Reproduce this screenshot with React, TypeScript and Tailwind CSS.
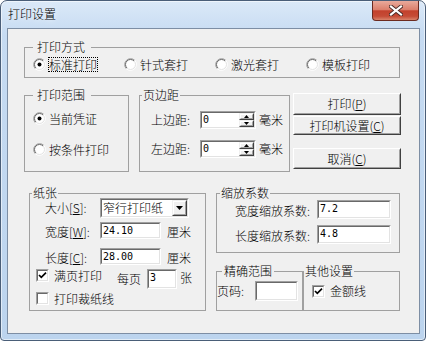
import React from "react";

const cjk = "font-['Noto_Sans_CJK_SC','Noto_Sans',sans-serif] font-light";
const mono = "font-['DejaVu_Sans_Mono',monospace] font-normal text-[10px] leading-[13px]";

function Sunken({ className = "", innerClassName = "", children }: { className?: string; innerClassName?: string; children?: React.ReactNode }) {
  return (
    <div className={"border border-t-[#a0a0a0] border-l-[#a0a0a0] border-b-white border-r-white " + className}>
      <div className={"h-full w-full border border-t-[#696969] border-l-[#696969] border-b-[#e3e3e3] border-r-[#e3e3e3] bg-white " + innerClassName}>
        {children}
      </div>
    </div>
  );
}

function Btn({ className = "", children }: { className?: string; children?: React.ReactNode }) {
  return (
    <div className={"border border-t-white border-l-white border-b-[#404040] border-r-[#404040] bg-[#f0f0f0] " + className}>
      <div className="h-full w-full border border-t-[#f0f0f0] border-l-[#f0f0f0] border-b-[#a0a0a0] border-r-[#a0a0a0] flex items-center justify-center leading-[14px]">
        {children}
      </div>
    </div>
  );
}

function SmallBtn({ className = "", children }: { className?: string; children?: React.ReactNode }) {
  return (
    <div className={"border border-t-[#f0f0f0] border-l-[#f0f0f0] border-b-[#404040] border-r-[#404040] bg-[#f0f0f0] " + className}>
      <div className="h-full w-full border border-t-white border-l-white border-b-[#a0a0a0] border-r-[#a0a0a0] flex items-center justify-center">
        {children}
      </div>
    </div>
  );
}

function RadioIcon({ checked }: { checked?: boolean }) {
  return (
    <svg width="13" height="13" viewBox="0 0 13 13" className="shrink-0">
      <circle cx="6.5" cy="6.5" r="5.5" fill="#fff" />
      <path d="M2.26 10.74 A6 6 0 0 1 10.74 2.26" stroke="#a0a0a0" strokeWidth="1" fill="none" />
      <path d="M10.74 2.26 A6 6 0 0 1 2.26 10.74" stroke="#ffffff" strokeWidth="1" fill="none" />
      <path d="M2.96 10.04 A5 5 0 0 1 10.04 2.96" stroke="#696969" strokeWidth="1" fill="none" />
      <path d="M10.04 2.96 A5 5 0 0 1 2.96 10.04" stroke="#e3e3e3" strokeWidth="1" fill="none" />
      {checked && <circle cx="6.5" cy="6.5" r="2" fill="#000" />}
    </svg>
  );
}

function Check({ checked }: { checked?: boolean }) {
  return (
    <div className="w-[13px] h-[13px] shrink-0 border border-t-[#a0a0a0] border-l-[#a0a0a0] border-b-white border-r-white">
      <div className="w-full h-full border border-t-[#696969] border-l-[#696969] border-b-[#e3e3e3] border-r-[#e3e3e3] bg-white flex items-center justify-center">
        {checked && (
          <svg width="9" height="9" viewBox="0 0 9 9">
            <polyline points="1,4 3.3,6.3 8,1.6" stroke="#000" strokeWidth="1.7" fill="none" />
          </svg>
        )}
      </div>
    </div>
  );
}

function Group({ className = "", label, labelClass = "", children }: { className?: string; label: string; labelClass?: string; children?: React.ReactNode }) {
  return (
    <div className={"relative border border-[#a0a0a0] " + className}>
      <span className={"absolute -top-[8px] bg-[#f0f0f0] leading-[14px] whitespace-nowrap " + labelClass}>{label}</span>
      {children}
    </div>
  );
}

function Radio({ checked, label, focus, className = "" }: { checked?: boolean; label: string; focus?: boolean; className?: string }) {
  return (
    <div className={"flex items-center h-[15px] " + className}>
      <RadioIcon checked={checked} />
      <span className={"ml-[2px] border leading-[13px] whitespace-nowrap " + (focus ? "border-dotted border-black" : "border-transparent")}>{label}</span>
    </div>
  );
}

function TriUp() {
  return (
    <svg width="5" height="3" viewBox="0 0 5 3"><polygon points="0,3 5,3 2.5,0" fill="#000" /></svg>
  );
}
function TriDown({ w = 5, h = 3 }: { w?: number; h?: number }) {
  return (
    <svg width={w} height={h} viewBox={`0 0 ${w} ${h}`}><polygon points={`0,0 ${w},0 ${w / 2},${h}`} fill="#000" /></svg>
  );
}

function SpinBox({ value }: { value: string }) {
  return (
    <Sunken className="w-[56px] h-[18px]" innerClassName="flex">
      <span className={"flex-1 pl-[1px] " + mono}>{value}</span>
      <div className="w-[15px] h-full flex flex-col">
        <SmallBtn className="flex-1"><TriUp /></SmallBtn>
        <SmallBtn className="flex-1"><TriDown /></SmallBtn>
      </div>
    </Sunken>
  );
}

export default function App() {
  return (
    <div className={"w-[426px] h-[341px] bg-white text-[12px] text-black " + cjk}>
      <div className="w-[426px] h-[341px] rounded-t-[7px] rounded-b-[4px] border border-[#4a5e78] bg-[linear-gradient(180deg,#dbe9f8_0%,#c6dbf2_10%,#bcd4ee_100%)] shadow-[inset_0_0_0_1px_rgba(255,255,255,0.55)] flex flex-col">
        {/* Title bar */}
        <div className="h-[27px] flex justify-between items-start">
          <span className="pl-[7px] pt-[6px] leading-[14px] [text-shadow:0_0_6px_#ffffff]">打印设置</span>
          <div className="mr-[6px] w-[47px] h-[20px] rounded-b-[4px] border border-t-0 border-[#6b2a20] bg-[linear-gradient(180deg,#e9aa9c_0%,#dc806d_45%,#c3412d_52%,#c54b36_80%,#d9836b_100%)] flex items-center justify-center">
            <svg width="14" height="11" viewBox="0 0 14 11">
              <path d="M2 1.5 L12 9.5 M12 1.5 L2 9.5" stroke="#4a2a26" strokeWidth="4" strokeLinecap="square" />
              <path d="M2 1.5 L12 9.5 M12 1.5 L2 9.5" stroke="#ffffff" strokeWidth="2.2" strokeLinecap="square" />
            </svg>
          </div>
        </div>
        {/* Client area */}
        <div className="ml-[6px] w-[413px] h-[306px] border border-[#7d8ea4] bg-[#f0f0f0] flex flex-col pl-[16px] pt-[18px]">
          {/* Row 1 */}
          <Group className="w-[376px] h-[31px]" label="打印方式" labelClass="left-[8px] pl-[4px] pr-[6px]">
            <div className="flex pl-[8px] pt-[9px]">
              <Radio checked focus label="标准打印" className="w-[91px]" />
              <Radio label="针式套打" className="w-[91px]" />
              <Radio label="激光套打" className="w-[91px]" />
              <Radio label="模板打印" className="w-[91px]" />
            </div>
          </Group>

          {/* Row 2 */}
          <div className="flex items-start mt-[17px]">
            <Group className="w-[105px] h-[77px]" label="打印范围" labelClass="left-[8px] pl-[4px] pr-[6px]">
              <div className="flex flex-col pl-[8px] pt-[15px]">
                <Radio checked label="当前凭证" />
                <Radio label="按条件打印" className="mt-[16px]" />
              </div>
            </Group>
            <Group className="ml-[10px] w-[151px] h-[77px]" label="页边距" labelClass="left-[2px] px-[1px]">
              <div className="flex flex-col pl-[11px] pt-[15px]">
                <div className="flex items-center">
                  <span className="w-[49px] leading-[14px]">上边距:</span>
                  <SpinBox value="0" />
                  <span className="ml-[3px] leading-[14px]">毫米</span>
                </div>
                <div className="flex items-center mt-[11px]">
                  <span className="w-[49px] leading-[14px]">左边距:</span>
                  <SpinBox value="0" />
                  <span className="ml-[3px] leading-[14px]">毫米</span>
                </div>
              </div>
            </Group>
            <div className="ml-[3px] -mt-[2px] w-[108px] flex flex-col">
              <Btn className="h-[22px]">打印(<span className="underline">P</span>)</Btn>
              <Btn className="h-[19px] mt-[1px]">打印机设置(<span className="underline">C</span>)</Btn>
              <Btn className="h-[21px] mt-[13px]">取消(<span className="underline">C</span>)</Btn>
            </div>
          </div>

          {/* Row 3 */}
          <div className="flex items-start mt-[21px]">
            <Group className="ml-[5px] w-[177px] h-[118px]" label="纸张" labelClass="left-[2px] px-[1px]">
              <div className="flex flex-col">
                <div className="flex items-center mt-[4px] pl-[15px]">
                  <span className="w-[55px] leading-[14px] whitespace-nowrap">大小[<span className="underline">S</span>]:</span>
                  <Sunken className="w-[89px] h-[20px]" innerClassName="flex items-start">
                    <span className="flex-1 pl-[1px] leading-[15px] whitespace-nowrap">窄行打印纸</span>
                    <SmallBtn className="w-[15px] h-full"><TriDown w={7} h={4} /></SmallBtn>
                  </Sunken>
                </div>
                <div className="flex items-center mt-[3px] pl-[15px]">
                  <span className="w-[55px] leading-[14px] mt-[4px] whitespace-nowrap">宽度[<span className="underline">W</span>]:</span>
                  <Sunken className="w-[61px] h-[17px]">
                    <span className={"block pl-[1px] " + mono}>24.10</span>
                  </Sunken>
                  <span className="ml-[6px] leading-[14px] mt-[4px]">厘米</span>
                </div>
                <div className="flex items-center mt-[8px] pl-[15px]">
                  <span className="w-[55px] leading-[14px] mt-[4px] whitespace-nowrap">长度[<span className="underline">C</span>]:</span>
                  <Sunken className="w-[61px] h-[17px]">
                    <span className={"block pl-[1px] " + mono}>28.00</span>
                  </Sunken>
                  <span className="ml-[6px] leading-[14px] mt-[4px]">厘米</span>
                </div>
                <div className="flex items-start mt-[4px] pl-[6px]">
                  <Check checked />
                  <span className="ml-[5px] leading-[14px]">满页打印</span>
                  <span className="ml-[15px] leading-[14px] mt-[3px]">每页</span>
                  <Sunken className="ml-[6px] w-[30px] h-[20px]">
                    <span className={"block pl-[1px] " + mono}>3</span>
                  </Sunken>
                  <span className="ml-[3px] leading-[14px] mt-[2px]">张</span>
                </div>
                <div className="flex items-start mt-[3px] pl-[6px]">
                  <Check />
                  <span className="ml-[5px] leading-[14px]">打印裁纸线</span>
                </div>
              </div>
            </Group>

            <div className="ml-[10px] w-[184px] flex flex-col">
              <Group className="w-[184px] h-[60px]" label="缩放系数" labelClass="left-[3px] px-[1px]">
                <div className="flex flex-col pl-[18px] pt-[6px]">
                  <div className="flex items-center">
                    <span className="w-[82px] leading-[14px] mt-[3px] whitespace-nowrap">宽度缩放系数:</span>
                    <Sunken className="w-[74px] h-[19px]">
                      <span className={"block pl-[1px] " + mono}>7.2</span>
                    </Sunken>
                  </div>
                  <div className="flex items-center mt-[6px]">
                    <span className="w-[82px] leading-[14px] mt-[3px] whitespace-nowrap">长度缩放系数:</span>
                    <Sunken className="w-[74px] h-[19px]">
                      <span className={"block pl-[1px] " + mono}>4.8</span>
                    </Sunken>
                  </div>
                </div>
              </Group>
              <div className="flex mt-[18px]">
                <Group className="w-[87px] h-[40px]" label="精确范围" labelClass="left-[5px] px-[2px]">
                  <div className="flex items-center pt-[9px]">
                    <span className="w-[38px] leading-[14px] whitespace-nowrap">页码:</span>
                    <Sunken className="w-[43px] h-[20px]" />
                  </div>
                </Group>
                <Group className="w-[97px] h-[40px]" label="其他设置" labelClass="left-[0px] px-[1px]">
                  <div className="flex items-center h-[20px] mt-[9px] pl-[8px]">
                    <Check checked />
                    <span className="ml-[5px] leading-[14px]">金额线</span>
                  </div>
                </Group>
              </div>
            </div>
          </div>
        </div>
      </div>
    </div>
  );
}
